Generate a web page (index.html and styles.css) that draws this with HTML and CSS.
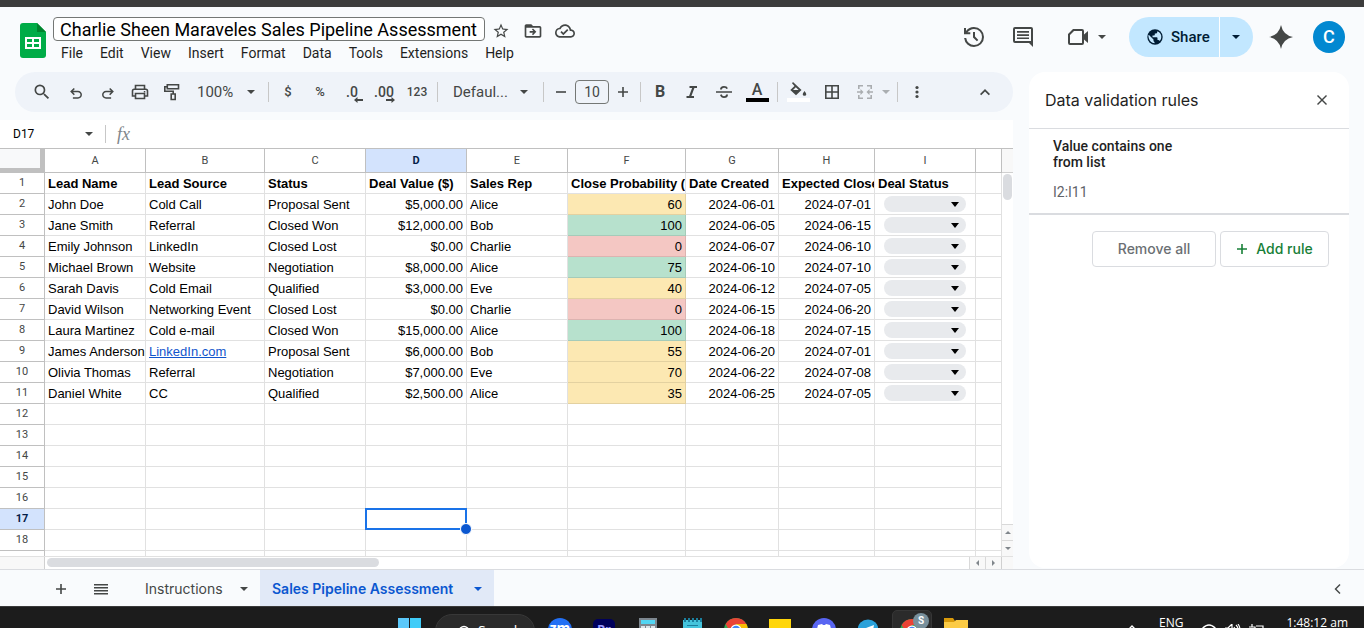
FILE: index.html
```html
<!DOCTYPE html>
<html lang="en">
<head>
<meta charset="utf-8">
<title>Charlie Sheen Maraveles Sales Pipeline Assessment</title>
<link rel="stylesheet" href="styles.css">
</head>
<body>
<div class="window-edge"></div>
<header class="header">
  <svg class="logo" width="26" height="35" viewBox="0 0 26 35" aria-hidden="true"><path fill="#00ac47" d="M3 0h14l9 9v23a3 3 0 0 1-3 3H3a3 3 0 0 1-3-3V3a3 3 0 0 1 3-3z"/><path fill="#00832d" d="M17 0l9 9h-9z"/><path fill="#fff" fill-rule="evenodd" d="M5 14h16v12H5zM7 16v3h5v-3zM14 16v3h5v-3zM7 21v3h5v-3zM14 21v3h5v-3z"/></svg>
  <div class="doc">
    <div class="doc-top">
      <input class="title" aria-label="Document title" value="Charlie Sheen Maraveles Sales Pipeline Assessment">
      <button class="plain" aria-label="Star"><svg width="18" height="18" viewBox="0 0 24 24"><path d="M22 9.24l-7.19-.62L12 2 9.19 8.63 2 9.24l5.46 4.73L5.82 21 12 17.27 18.18 21l-1.63-7.03L22 9.24zM12 15.4l-3.76 2.27 1-4.28-3.32-2.88 4.38-.38L12 6.1l1.71 4.04 4.38.38-3.32 2.88 1 4.28L12 15.4z"/></svg></button>
      <button class="plain" aria-label="Move"><svg width="20" height="20" viewBox="0 0 24 24"><path d="M20 6h-8l-2-2H4c-1.1 0-2 .9-2 2v12c0 1.100.9 2 2 2h16c1.100 0 2-.9 2-2V8c0-1.100-.9-2-2-2zm0 12H4V8h16v10zM12 17l4-4-4-4-1.300 1.300 1.700 1.700H8v2h4.400l-1.700 1.700z"/></svg></button>
      <button class="plain" aria-label="Saved to Drive"><svg width="20" height="20" viewBox="0 0 24 24"><path d="M19.350 10.040C18.670 6.590 15.640 4 12 4 9.110 4 6.600 5.640 5.350 8.040 2.340 8.360 0 10.910 0 14c0 3.310 2.690 6 6 6h13c2.760 0 5-2.240 5-5 0-2.640-2.050-4.780-4.650-4.960zM19 18H6c-2.210 0-4-1.790-4-4 0-2.050 1.530-3.760 3.560-3.970l1.070-.11.5-.95C8.080 7.140 9.940 6 12 6c2.620 0 4.880 1.860 5.390 4.430l.3 1.500 1.530.11c1.560.1 2.780 1.410 2.780 2.960 0 1.650-1.350 3-3 3zm-9-3.820l-2.090-2.090L6.500 13.500 10 17l6.010-6.010-1.410-1.410z"/></svg></button>
    </div>
    <nav class="menu"><button>File</button><button>Edit</button><button>View</button><button>Insert</button><button>Format</button><button>Data</button><button>Tools</button><button>Extensions</button><button>Help</button></nav>
  </div>
  <div class="actions">
    <button class="plain" aria-label="History"><svg width="24" height="24" viewBox="0 0 24 24"><path d="M12 22q-3.800 0-6.600-2.500T2.100 13H4.200q.3 3 2.600 5T12 20q3.400 0 5.700-2.300T20 12t-2.300-5.700T12 4Q10.100 4 8.400 4.900T5.500 7.300H8.300v2H2V3h2v2.900Q5.400 4.100 7.500 3T12 2q4.200 0 7.100 2.900T22 12t-2.900 7.100T12 22zM14.900 16.300L11 12.400V7h2v4.600l3.300 3.300z"/></svg></button>
    <button class="plain comment" aria-label="Comments"><svg width="24" height="24" viewBox="0 0 24 24"><path fill-rule="evenodd" d="M22 22l-4-4H4q-2 0-2-2V4q0-2 2-2h16q2 0 2 2zM4 4v12h16V4zM6 6h12v1.700H6zM6 9.200h12v1.700H6zM6 12.400h12v1.700H6z"/></svg></button>
    <button class="plain meet" aria-label="Meet"><svg width="22" height="18" viewBox="0 0 22 18"><path fill-rule="evenodd" d="M6 1h9q2 0 2 2v3.500L21 3v12l-4-3.500V15q0 2-2 2H3q-2 0-2-2V6zM7 3L3 7v8h12V3z"/></svg><span class="caret"></span></button>
    <div class="share">
      <button class="share-main"><svg width="16" height="16" viewBox="0 0 16 16"><circle cx="8" cy="8" r="7.700" fill="#001d35"/><path fill="#c2e7ff" d="M2 6l4.500 4.500v1.300q0 1 1 1.200V14.200Q3 13.700 1.900 9.500T2 6zM10.300 2.200q4.300 1.800 4 6.100-.1 2-1.600 3.700-.4-1-1.500-1h-.7V9q0-.8-.8-.8H5.500V6.600H7q.8 0 .8-.8V4.400h1.500q1.100-.2 1-2.200z"/></svg>Share</button><button class="share-more" aria-label="Share options"><span class="caret"></span></button>
    </div>
    <button class="plain gem" aria-label="Gemini"><svg width="24" height="24" viewBox="0 0 24 24"><path d="M12 0q2 10 12 12-10 2-12 12-2-10-12-12 10-2 12-12z"/></svg></button>
    <button class="avatar" aria-label="Account">C</button>
  </div>
</header>
<main class="main">
  <section class="editor">
    <div class="toolbar">
      <button class="tool search" aria-label="Search menus"><svg width="20" height="20" viewBox="0 0 24 24"><path d="M15.500 14h-.79l-.28-.27A6.470 6.470 0 0 0 16 9.500 6.500 6.500 0 1 0 9.500 16c1.610 0 3.090-.59 4.230-1.570l.27.28v.79l5 4.990L20.490 19l-4.990-5zm-6 0C7.010 14 5 11.990 5 9.500S7.010 5 9.500 5 14 7.010 14 9.500 11.990 14 9.500 14z"/></svg></button>
      <button class="tool" aria-label="Undo"><svg width="16" height="16" viewBox="0 0 18 18"><path d="M5.500 16.500v-1.700h5.700q1.200 0 2-.8t.8-1.900-.8-1.900-2-.8H5.700l2 2-1.200 1.200L2.400 8.500l4.100-4.100 1.200 1.200-2 2h5.500q1.900 0 3.200 1.300t1.300 3.200-1.300 3.100-3.200 1.300z"/></svg></button>
      <button class="tool" aria-label="Redo"><svg width="16" height="16" viewBox="0 0 18 18"><path d="M12.500 16.500v-1.700H6.800q-1.200 0-2-.8T4 12.100t.8-1.900 2-.8h5.500l-2 2 1.200 1.200 4.100-4.100-4.100-4.100-1.200 1.200 2 2H6.800q-1.900 0-3.200 1.300t-1.300 3.200 1.300 3.100 3.200 1.300z"/></svg></button>
      <button class="tool" aria-label="Print"><svg width="18" height="18" viewBox="0 0 18 18"><path fill="none" stroke="#444746" stroke-width="1.600" d="M4.500 6V2.500h9V6M4.500 13h-3V8q0-1.700 1.700-1.700h11.600q1.700 0 1.700 1.700v5h-3M4.500 10.500h9v5h-9z"/><path d="M12.800 8h1.500v1.500h-1.500z"/></svg></button>
      <button class="tool" aria-label="Paint format"><svg width="18" height="18" viewBox="0 0 18 18"><path fill="none" stroke="#444746" stroke-width="1.600" d="M4.300 1.800h11.200v4H4.300zM4.300 3.800H1.800v4.500h8.400V11M8.200 11h4v5.500h-4z"/></svg></button>
      <button class="tool zoom">100%<span class="caret"></span></button>
      <i class="sep"></i>
      <button class="tool fmt">$</button>
      <button class="tool fmt">%</button>
      <button class="tool dec" aria-label="Decrease decimal places"><span>.0</span><svg width="10" height="6" viewBox="0 0 10 6"><path d="M3.500 0v2H9v2H3.500v2L0 3z"/></svg></button>
      <button class="tool dec" aria-label="Increase decimal places"><span>.00</span><svg width="10" height="6" viewBox="0 0 10 6"><path d="M5.500 0v2H0v2h5.500v2L9 3z"/></svg></button>
      <button class="tool num">123</button>
      <i class="sep"></i>
      <button class="tool font">Defaul...<span class="caret"></span></button>
      <i class="sep"></i>
      <button class="tool step" aria-label="Smaller"><svg width="12" height="12" viewBox="0 0 12 12"><path d="M1 5.200h10v1.600H1z"/></svg></button>
      <input class="size" aria-label="Font size" value="10">
      <button class="tool step" aria-label="Larger"><svg width="12" height="12" viewBox="0 0 12 12"><path d="M1 5.200h4.200V1h1.600v4.200H11v1.600H6.800V11H5.200V6.800H1z"/></svg></button>
      <i class="sep"></i>
      <button class="tool bold">B</button>
      <button class="tool" aria-label="Italic"><svg width="18" height="18" viewBox="0 0 18 18"><path d="M6.500 3H14v2h-2.600l-3 8H11v2H3.500v-2h2.600l3-8H6.500z"/></svg></button>
      <button class="tool" aria-label="Strikethrough"><svg width="18" height="18" viewBox="0 0 18 18"><path d="M1 8.200h16v1.600H1zM5 6.500Q5 3 9 3q3 0 4 2.200l-1.600.8Q10.700 4.700 9 4.700q-2.100 0-2.100 1.800zM5 12l1.600-.7q.6 2 2.400 2 2.100 0 2.100-1.800H13Q13 15 9 15q-3 0-4-3z"/></svg></button>
      <button class="tool wide color">A<span class="swatch black"></span></button>
      <i class="sep"></i>
      <button class="tool wide color" aria-label="Fill color"><svg width="18" height="16" viewBox="0 0 18 16"><path fill-rule="evenodd" d="M4 0l8.500 8-5.500 5.200L1.300 8l4.200-4L3 1.300zM6.800 5.300L4 8h5.700zM15.500 9q1.800 2.200 1.800 3.200 0 1.500-1.800 1.500t-1.800-1.500Q13.700 11.200 15.500 9z"/></svg><span class="swatch white"></span></button>
      <button class="tool wide" aria-label="Borders"><svg width="18" height="18" viewBox="0 0 18 18"><path fill-rule="evenodd" d="M2 2h14v14H2zM3.600 3.600v4.600h4.600V3.600zM9.800 3.600v4.600h4.600V3.600zM3.600 9.800v4.600h4.600V9.800zM9.800 9.800v4.600h4.600V9.800z"/></svg></button>
      <button class="tool dim" aria-label="Merge cells"><svg width="18" height="18" viewBox="0 0 18 18"><path d="M2 2h5v1.600H3.600V6H2zM11 2h5v4h-1.600V3.600H11zM2 12h1.600v2.400H7V16H2zM14.400 12H16v4h-5v-1.600h3.400zM1 8.200h3.500V6L7.500 9l-3 3V9.800H1zM17 8.200h-3.500V6l-3 3 3 3V9.800H17z"/></svg></button>
      <button class="tool dim drop" aria-label="Merge type"><span class="caret"></span></button>
      <i class="sep"></i>
      <button class="tool" aria-label="More"><svg width="18" height="18" viewBox="0 0 18 18"><circle cx="9" cy="4.500" r="1.600"/><circle cx="9" cy="9" r="1.600"/><circle cx="9" cy="13.500" r="1.600"/></svg></button>
      <button class="tool fold" aria-label="Hide the menus"><svg width="12" height="12" viewBox="0 0 12 12"><path d="M6 3l5 5-1.200 1.200L6 5.400 2.200 9.200 1 8z"/></svg></button>
    </div>
    <div class="formula">
      <input class="name" aria-label="Name box" value="D17"><span class="caret"></span><i class="bar"></i><span class="fx">fx</span>
    </div>
    <div class="grid">
      <div class="sheet">
        <table>
          <colgroup><col class="c-head"><col class="c-m"><col class="c-b"><col class="c-m"><col class="c-m"><col class="c-m"><col class="c-f"><col class="c-g"><col class="c-h"><col class="c-m"><col></colgroup>
          <thead><tr><th class="corner"><th>A<th>B<th>C<th class="on">D<th>E<th>F<th>G<th>H<th>I<th></tr></thead>
          <tbody>
          <tr class="heads"><th>1<td>Lead Name<td>Lead Source<td>Status<td>Deal Value ($)<td>Sales Rep<td>Close Probability (%)<td>Date Created<td>Expected Close<td>Deal Status<td></tr>
          <tr><th>2<td>John Doe<td>Cold Call<td>Proposal Sent<td class="n">$5,000.00<td>Alice<td class="n mid">60<td class="n">2024-06-01<td class="n">2024-07-01<td class="chip"><span><select aria-label="Deal status 2"><option></select></span><td></tr>
          <tr><th>3<td>Jane Smith<td>Referral<td>Closed Won<td class="n">$12,000.00<td>Bob<td class="n high">100<td class="n">2024-06-05<td class="n">2024-06-15<td class="chip"><span><select aria-label="Deal status 3"><option></select></span><td></tr>
          <tr><th>4<td>Emily Johnson<td>LinkedIn<td>Closed Lost<td class="n">$0.00<td>Charlie<td class="n low">0<td class="n">2024-06-07<td class="n">2024-06-10<td class="chip"><span><select aria-label="Deal status 4"><option></select></span><td></tr>
          <tr><th>5<td>Michael Brown<td>Website<td>Negotiation<td class="n">$8,000.00<td>Alice<td class="n high">75<td class="n">2024-06-10<td class="n">2024-07-10<td class="chip"><span><select aria-label="Deal status 5"><option></select></span><td></tr>
          <tr><th>6<td>Sarah Davis<td>Cold Email<td>Qualified<td class="n">$3,000.00<td>Eve<td class="n mid">40<td class="n">2024-06-12<td class="n">2024-07-05<td class="chip"><span><select aria-label="Deal status 6"><option></select></span><td></tr>
          <tr><th>7<td>David Wilson<td>Networking Event<td>Closed Lost<td class="n">$0.00<td>Charlie<td class="n low">0<td class="n">2024-06-15<td class="n">2024-06-20<td class="chip"><span><select aria-label="Deal status 7"><option></select></span><td></tr>
          <tr><th>8<td>Laura Martinez<td>Cold e-mail<td>Closed Won<td class="n">$15,000.00<td>Alice<td class="n high">100<td class="n">2024-06-18<td class="n">2024-07-15<td class="chip"><span><select aria-label="Deal status 8"><option></select></span><td></tr>
          <tr><th>9<td>James Anderson<td><a href="#">LinkedIn.com</a><td>Proposal Sent<td class="n">$6,000.00<td>Bob<td class="n mid">55<td class="n">2024-06-20<td class="n">2024-07-01<td class="chip"><span><select aria-label="Deal status 9"><option></select></span><td></tr>
          <tr><th>10<td>Olivia Thomas<td>Referral<td>Negotiation<td class="n">$7,000.00<td>Eve<td class="n mid">70<td class="n">2024-06-22<td class="n">2024-07-08<td class="chip"><span><select aria-label="Deal status 10"><option></select></span><td></tr>
          <tr><th>11<td>Daniel White<td>CC<td>Qualified<td class="n">$2,500.00<td>Alice<td class="n mid">35<td class="n">2024-06-25<td class="n">2024-07-05<td class="chip"><span><select aria-label="Deal status 11"><option></select></span><td></tr>
          <tr><th>12<td><td><td><td><td><td><td><td><td><td></tr>
          <tr><th>13<td><td><td><td><td><td><td><td><td><td></tr>
          <tr><th>14<td><td><td><td><td><td><td><td><td><td></tr>
          <tr><th>15<td><td><td><td><td><td><td><td><td><td></tr>
          <tr><th>16<td><td><td><td><td><td><td><td><td><td></tr>
          <tr><th class="on">17<td><td><td><td class="picked"><td><td><td><td><td><td></tr>
          <tr><th>18<td><td><td><td><td><td><td><td><td><td></tr>
          <tr><th><td><td><td><td><td><td><td><td><td><td></tr>
          </tbody>
        </table>
      </div>
      <div class="vscroll"><div class="vtop"></div><div class="vthumb"></div><button aria-label="Scroll up"><i class="tri up"></i></button><button aria-label="Scroll down"><i class="tri down"></i></button></div>
    </div>
    <div class="hscroll"><div class="hhead"></div><div class="hthumb"></div><button aria-label="Scroll left"><i class="tri left"></i></button><button aria-label="Scroll right"><i class="tri right"></i></button><div class="hend"></div></div>
  </section>
  <aside class="panel">
    <div class="panel-head"><h2>Data validation rules</h2><button class="plain" aria-label="Close"><svg width="12" height="12" viewBox="0 0 12 12"><path d="M2 1l4 4 4-4 1 1-4 4 4 4-1 1-4-4-4 4-1-1 4-4-4-4z"/></svg></button></div>
    <div class="rule"><div class="rule-name">Value contains one from list</div><div class="rule-range">I2:I11</div></div>
    <div class="panel-actions"><button class="remove">Remove all</button><button class="add"><svg width="12" height="12" viewBox="0 0 12 12"><path d="M1 5.200h4.200V1h1.600v4.200H11v1.600H6.800V11H5.200V6.800H1z"/></svg>Add rule</button></div>
  </aside>
</main>
<footer class="tabs">
  <button class="plain tab-add" aria-label="Add sheet"><svg width="12" height="12" viewBox="0 0 12 12"><path d="M1 5.200h4.200V1h1.600v4.200H11v1.600H6.800V11H5.200V6.800H1z"/></svg></button>
  <button class="plain tab-all" aria-label="All sheets"><svg width="14" height="12" viewBox="0 0 14 12"><path d="M0 1h14v1.500H0zM0 4h14v1.500H0zM0 7h14v1.500H0zM0 10h14v1.500H0z"/></svg></button>
  <button class="tab">Instructions<span class="caret"></span></button>
  <button class="tab active">Sales Pipeline Assessment<span class="caret"></span></button>
  <button class="plain side" aria-label="Show side panel"><svg width="12" height="12" viewBox="0 0 12 12"><path d="M8.500 1l1 1-4 4 4 4-1 1-5-5z"/></svg></button>
</footer>
<div class="taskbar">
  <div></div>
  <div class="apps">
    <span class="app"><svg width="23" height="23"><path fill="#5bc8fa" d="M0 0h11v11H0z"/><path fill="#40ccf8" d="M12 0h11v11H12z"/></svg></span>
    <button class="find"><svg width="12" height="12" viewBox="0 0 12 12"><circle cx="6" cy="6" r="4.500" fill="none" stroke="#fff" stroke-width="1.600"/></svg>Search</button>
    <span class="app round">zm</span>
    <span class="app pr">Pr</span>
    <span class="app"><svg width="18" height="24"><path fill="#7d8790" d="M0 0h18v24H0z"/><path fill="#52d5f3" d="M2 2h14v4H2z"/><path fill="#dce3e8" d="M2 8h4v3H2zM7 8h4v3H7zM12 8h4v3h-4z"/></svg></span>
    <span class="app"><svg width="19" height="24"><path fill="#45c4dc" d="M0 2h19v22H0z"/><path fill="#1a7f9e" d="M1 0h2v4H1zM5 0h2v4H5zM9 0h2v4H9zM13 0h2v4h-2zM17 0h2v4h-2zM4 7h11v1H4z"/></svg></span>
    <span class="app"><svg width="24" height="24" viewBox="0 0 24 24"><circle cx="12" cy="12" r="12" fill="#34a853"/><path fill="#ea4335" d="M1.600 6Q5 0 12 0t10.400 6H12L6.800 15z"/><path fill="#fbbc04" d="M22.400 6Q25 11 23 16L17 15 12 6z"/><circle cx="12" cy="12" r="5.500" fill="#fff"/><circle cx="12" cy="12" r="4.300" fill="#4285f4"/></svg></span>
    <span class="app low-icon"><svg width="22" height="23"><path fill="#ffd60a" d="M0 0h22v23H0z"/></svg></span>
    <span class="app"><svg width="24" height="24" viewBox="0 0 24 24"><circle cx="12" cy="12" r="12" fill="#5865f2"/><path fill="#fff" d="M6 7l4-1 1 1h2l1-1 4 1 2 8H4z"/></svg></span>
    <span class="app low-icon"><svg width="20" height="23" viewBox="0 0 20 23"><circle cx="10" cy="11" r="10.500" fill="#2aa1da"/><path fill="#fff" d="M4 10.500L16 6l-2 11-4-3z"/></svg></span>
    <span class="app current"><svg width="24" height="24" viewBox="0 0 24 24"><circle cx="12" cy="12" r="12" fill="#34a853"/><path fill="#ea4335" d="M1.600 6Q5 0 12 0t10.400 6H12L6.800 15z"/><circle cx="12" cy="12" r="5.500" fill="#fff"/><circle cx="12" cy="12" r="4.300" fill="#4285f4"/></svg><b class="badge">S</b></span>
    <span class="app"><svg width="24" height="22"><path fill="#d99a0b" d="M0 0h9l2 3v3H0z"/><path fill="#fccb45" d="M0 4h10l2-2h12v20H0z"/></svg></span>
  </div>
  <div class="tray">
    <svg class="tray-low" width="8" height="6" viewBox="0 0 8 6"><path fill="none" stroke="#fff" stroke-width="1.400" d="M0 5l4-4 4 4"/></svg>
    <span class="lang">ENG</span>
    <svg class="tray-mid" width="16" height="12" viewBox="0 0 16 12"><path fill="none" stroke="#fff" stroke-width="1.400" d="M1 5q7-8 14 0M4 7.500q4-5 8 0"/></svg>
    <svg class="tray-mid" width="16" height="12" viewBox="0 0 16 12"><path fill="none" stroke="#fff" stroke-width="1.200" d="M0 4h3l4-4v12M9 3q2 3 0 5M11 1q4 4 0 9M13 0q4 6 0 11"/></svg>
    <svg class="tray-mid" width="16" height="12" viewBox="0 0 16 12"><path fill="none" stroke="#fff" stroke-width="1.200" d="M7 2h7v8H2V7M3 0v3M0 3h6v2H3"/></svg>
    <span class="clock">1:48:12 am</span>
  </div>
</div>
</body>
</html>
```
FILE: styles.css
```css
* { box-sizing: border-box; }
body {
  margin: 0;
  height: 100vh;
  display: flex;
  flex-direction: column;
  overflow: hidden;
  background: #f9fbfd;
  color: #1f1f1f;
  font: 14px/20px Roboto, "Liberation Sans", sans-serif;
}
button, input, select { font: inherit; color: inherit; border: 0; margin: 0; padding: 0; background: none; border-radius: 0; }
button { white-space: nowrap; }
svg { display: block; flex: none; fill: #444746; }
.window-edge { height: 7px; flex: none; background: #3c3c3c; }
.caret { flex: none; width: 0; height: 0; border: 4px solid transparent; border-top-color: currentColor; border-bottom: 0; }
.plain { display: flex; align-items: center; justify-content: center; color: #444746; }

/* Header */
.header { flex: none; height: 65px; display: flex; align-items: flex-start; padding: 10px 19px 0 20px; }
.logo { margin: 6px 7px 0 0; }
.doc-top { display: flex; align-items: flex-start; }
.doc-top .plain { width: 32px; height: 28px; }
.title { width: 432px; height: 24px; padding: 0 6px; border: 1px solid #747775; border-radius: 4px; background: #fff; font-size: 18px; color: #000; }
.menu { display: flex; gap: 17px; padding: 0 8px; }
.menu button { line-height: 16px; }
.actions { margin-left: auto; height: 40px; display: flex; align-items: center; }
.comment { margin: 0 32px 0 25px; }
.meet { gap: 9px; margin-right: 23px; }
.share { display: flex; height: 40px; margin-right: 16px; border-radius: 20px; overflow: hidden; background: #c2e7ff; color: #001d35; font-size: 15px; font-weight: 500; }
.share button { display: flex; align-items: center; gap: 8px; }
.share-main { width: 90px; padding-left: 18px; }
.share-more { width: 34px; border-left: 1px solid #fff; padding-left: 12px; }
.gem { margin-right: 20px; }
.avatar { width: 32px; height: 32px; border-radius: 50%; background: #0288d1; color: #fff; font-size: 18px; font-weight: 500; }

/* Work area */
.main { flex: 1; min-height: 0; display: flex; gap: 16px; padding-right: 15px; }
.editor { flex: 1; min-width: 0; display: flex; flex-direction: column; }
.toolbar { flex: none; height: 40px; margin: 0 0 8px 15px; padding: 0 12px 0 11px; border-radius: 20px; background: #eff3f9; display: flex; align-items: center; color: #444746; }
.tool { flex: none; width: 32px; height: 30px; display: flex; align-items: center; justify-content: center; }
.search { margin-right: 2px; }
.sep { flex: none; width: 1px; height: 20px; margin: 0 3px; background: #c7c7c7; }
.zoom, .font { justify-content: space-between; padding: 0 10px 0 9px; width: 77px; font-size: 15px; }
.font { width: 99px; padding: 0 12px; }
.fmt { font-size: 13px; font-weight: 500; }
.dec { position: relative; font-weight: 500; }
.dec svg { position: absolute; right: 4px; bottom: 4px; }
.num { width: 34px; font-size: 12px; font-weight: 500; }
.step { width: 28px; }
.size { width: 34px; height: 24px; border: 1px solid #747775; border-radius: 4px; text-align: center; }
.bold { font-size: 16px; font-weight: 700; }
.wide { width: 34px; }
.color { flex-direction: column; font-size: 16px; line-height: 16px; font-weight: 500; }
.swatch { width: 23px; height: 4px; }
.black { background: #000; }
.white { background: #fff; }
.dim { opacity: .4; }
.drop { width: 13px; padding-right: 3px; }
.fold { margin-left: auto; }

.formula { flex: none; height: 29px; display: flex; align-items: center; background: #fff; border-bottom: 1px solid #c0c0c0; padding-left: 13px; color: #444746; }
.name { width: 72px; font-size: 12px; color: #000; }
.bar { width: 1px; height: 18px; margin: 0 11px 0 12px; background: #c7c7c7; }
.fx { font: italic 18px "Liberation Serif", serif; color: #80868b; }

/* Grid */
.grid { flex: 1; min-height: 0; display: flex; background: #fff; }
.sheet { flex: 1; min-width: 0; overflow: hidden; }
table { width: 100%; table-layout: fixed; border-collapse: separate; border-spacing: 0; font: 13px/18px "Liberation Sans", Arial, sans-serif; color: #000; }
.c-head { width: 45px; }
.c-m { width: 101px; }
.c-b { width: 119px; }
.c-f { width: 118px; }
.c-g { width: 93px; }
.c-h { width: 96px; }
th, td { height: 21px; padding: 2px 3px 0; border-right: 1px solid #e1e1e1; border-bottom: 1px solid #e1e1e1; overflow: hidden; white-space: nowrap; text-align: left; }
th { padding-top: 1px; border-color: #c0c0c0; text-align: center; font: 11px/18px Roboto, sans-serif; color: #444746; vertical-align: top; }
thead th { height: 24px; line-height: 22px; }
.corner { background: #f8f9fa; border-right: 5px solid #c0c0c0; border-bottom: 5px solid #c0c0c0; }
.on { background: #d3e3fd; color: #041e49; font-weight: 700; }
.heads td { font-weight: 700; }
td.n { text-align: right; }
.mid { background: #fce8b2; border-color: #e3d1a0; }
.high { background: #b7e1cd; border-color: #a5cbb9; }
.low { background: #f4c7c3; border-color: #dcb3b0; }
td a { color: #1155cc; }
.chip { padding: 0 9px; }
.chip span { display: block; position: relative; height: 16px; }
.chip select { display: block; width: 100%; height: 16px; border-radius: 8px; background: #e8eaed; appearance: none; }
.chip span::after { content: ""; position: absolute; right: 7px; top: 6px; border: 4px solid transparent; border-top: 5px solid #000; border-bottom: 0; pointer-events: none; }
.picked { position: relative; overflow: visible; }
.picked::before { content: ""; position: absolute; inset: -1px; border: 2px solid #1a73e8; }
.picked::after { content: ""; position: absolute; right: -6px; bottom: -6px; width: 10px; height: 10px; border: 1px solid #fff; border-radius: 50%; background: #0b57d0; z-index: 1; }

.vscroll { width: 11px; flex: none; display: flex; flex-direction: column; }
.vtop { height: 24px; background: #f8f8f8; border-bottom: 1px solid #d0d0d0; }
.vthumb { width: 9px; height: 26px; margin: 1px 1px auto; border-radius: 5px; background: #dadce0; }
.vscroll button { height: 16px; display: flex; align-items: center; justify-content: center; background: #f8f8f8; border-top: 1px solid #d9d9d9; }
.tri { width: 0; height: 0; border: 3px solid transparent; }
.up { border-bottom-color: #80868b; border-top: 0; }
.down { border-top-color: #80868b; border-bottom: 0; }
.left { border-right-color: #80868b; border-left: 0; }
.right { border-left-color: #80868b; border-right: 0; }
.hscroll { flex: none; height: 13px; display: flex; align-items: stretch; background: #fff; border-top: 1px solid #e1e1e1; }
.hhead { width: 45px; background: #f8f8f8; border-right: 1px solid #d0d0d0; }
.hthumb { width: 332px; height: 9px; margin: 1px auto 0 2px; border-radius: 5px; background: #dadce0; }
.hscroll button { width: 16px; display: flex; align-items: center; justify-content: center; background: #f8f8f8; border-left: 1px solid #d9d9d9; }
.hend { width: 12px; background: #f8f8f8; border-left: 1px solid #d0d0d0; }

/* Side panel */
.panel { flex: none; width: 320px; margin-bottom: 1px; border-radius: 16px; background: #fff; }
.panel-head { height: 57px; display: flex; align-items: center; justify-content: space-between; padding: 0 20px 0 16px; border-bottom: 1px solid #dadce0; }
.panel-head h2 { margin: 0; font: 400 16px/20px Inter, Roboto, sans-serif; }
.panel-head .plain { width: 14px; height: 20px; }
.rule { padding: 9px 24px 11px; border-bottom: 2px solid #dadce0; }
.rule-name { width: 128px; font-weight: 500; line-height: 16px; }
.rule-range { margin-top: 12px; color: #5f6368; }
.panel-actions { display: flex; justify-content: flex-end; gap: 4px; padding: 16px 20px; }
.panel-actions button { height: 36px; display: flex; align-items: center; justify-content: center; gap: 8px; border: 1px solid #dadce0; border-radius: 4px; font: 500 14px/20px Inter, Roboto, sans-serif; }
.panel-actions .remove { width: 124px; color: #6b6f73; }
.panel-actions .add { width: 109px; color: #188038; }
.add svg { fill: #188038; }

/* Sheet tabs */
.tabs { flex: none; height: 37px; display: flex; align-items: stretch; border-top: 1px solid #dadce0; padding: 2px 19px 0 48px; font: 14px/20px Inter, Roboto, sans-serif; }
.tab-add { width: 26px; }
.tab-all { width: 54px; margin-right: 5px; }
.tab { width: 127px; display: flex; align-items: center; justify-content: space-between; padding: 0 12px; color: #444746; }
.tab.active { width: 234px; margin-top: -2px; padding-top: 2px; background: #e1e9f7; color: #0b57d0; font-weight: 600; }
.side { width: 16px; margin-left: auto; }

/* System taskbar */
.taskbar { flex: none; height: 22px; overflow: hidden; display: grid; grid-template-columns: 1fr auto 1fr; background: #1c1c1c; border-top: 1px solid #3a3a3a; color: #fff; font: 12px/16px "Open Sans", sans-serif; }
.apps { display: flex; align-items: flex-start; padding-left: 1px; }
.app { width: 44px; display: flex; justify-content: center; padding-top: 11px; }
.low-icon { padding-top: 12px; }
.find { width: 100px; height: 34px; margin: 7px 3px 0 4px; padding: 0 22px; border: 1px solid #383838; border-radius: 17px; background: #2b2b2b; display: flex; align-items: center; gap: 8px; font-size: 14px; }
.round, .pr { width: 24px; height: 34px; margin: 11px 10px 0; padding: 0; border-radius: 12px; background: #2370f4; font-weight: 700; font-size: 14px; line-height: 20px; }
.pr { width: 22px; margin: 12px 11px 0; border-radius: 5px; background: #00005b; color: #9999ff; font-size: 13px; }
.current { position: relative; width: 40px; height: 40px; margin: 3px 2px 0; padding-top: 8px; border: 1px solid #363636; border-radius: 5px; background: #2b2b2b; }
.badge { position: absolute; top: 2px; right: 2px; width: 16px; height: 16px; border-radius: 50%; background: #78909c; font: 700 10px/16px Roboto, sans-serif; text-align: center; }
.tray { display: flex; justify-content: flex-end; align-items: flex-start; gap: 8px; padding: 8px 16px 0 0; }
.tray svg { fill: none; }
.lang { margin: 0 10px 0 15px; }
.tray-low { margin-top: 10px; }
.tray-mid { margin-top: 9px; }
.clock { margin-left: 13px; white-space: nowrap; }
```
